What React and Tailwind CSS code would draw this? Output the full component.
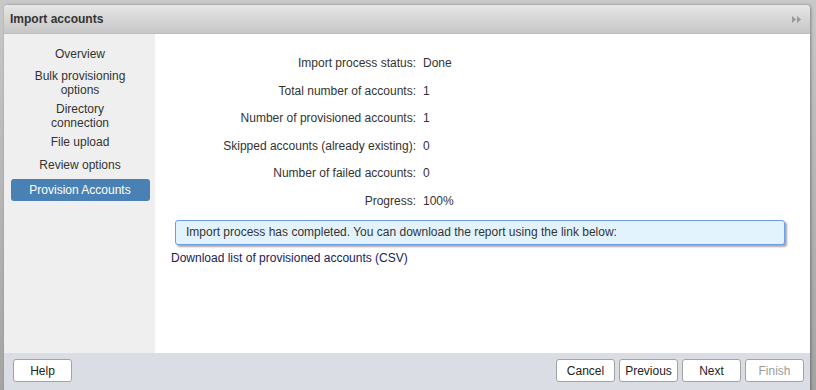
import React from "react";

const rows = [
  ["Import process status:", "Done"],
  ["Total number of accounts:", "1"],
  ["Number of provisioned accounts:", "1"],
  ["Skipped accounts (already existing):", "0"],
  ["Number of failed accounts:", "0"],
  ["Progress:", "100%"],
];

function Btn({ children, disabled }) {
  return (
    <button
      className={
        "w-[59px] h-[23px] bg-white border border-[#a3a3a3] rounded-[3px] text-[12px] " +
        (disabled ? "text-[#9c9c9c]" : "text-[#222]")
      }
    >
      {children}
    </button>
  );
}

export default function App() {
  return (
    <div className="w-[816px] h-[390px] overflow-hidden bg-gradient-to-b from-[#c8c8c8] to-[#a4a4a4] pl-[4px] pt-[5px] pr-[6px] font-['Liberation_Sans',Arial,sans-serif] text-[12px] text-[#333]">
      <div className="h-[400px] flex flex-col bg-white rounded-t-[4px] shadow-[1px_0_3px_rgba(0,0,0,0.35)] overflow-hidden">
        <div className="h-[29px] shrink-0 flex items-center justify-between pl-[6px] pr-[9px] bg-gradient-to-b from-[#e6e6e6] to-[#c6c6c6] border-b border-[#bdbdbd]">
          <span className="font-bold text-[12px] text-[#333]">Import accounts</span>
          <svg width="9" height="7" viewBox="0 0 9 7">
            <path d="M0 0 L4 3.5 L0 7 Z M5 0 L9 3.5 L5 7 Z" fill="#9a9a9a" />
          </svg>
        </div>
        <div className="h-[319px] shrink-0 flex">
          <div className="w-[151px] shrink-0 bg-[#efefef] flex flex-col items-center pt-[13px] pl-[1px] leading-[14px] text-center text-[#333]">
            <div className="h-[20px]">Overview</div>
            <div className="mt-[2px]">Bulk provisioning<br />options</div>
            <div className="mt-[5px]">Directory<br />connection</div>
            <div className="mt-[5px] h-[22px]">File upload</div>
            <div className="h-[22px] pt-[1px]">Review options</div>
            <div className="w-[139px] h-[22px] bg-[#4a81b4] rounded-[3px] text-white flex items-center justify-center">
              Provision Accounts
            </div>
          </div>
          <div className="flex-1 flex flex-col pt-[22px] pl-[16px] pr-[25px]">
            <div className="flex flex-col gap-[13.6px] leading-[14px]">
              {rows.map(([k, v]) => (
                <div key={k} className="flex">
                  <div className="w-[245px] text-right">{k}</div>
                  <div className="pl-[7px]">{v}</div>
                </div>
              ))}
            </div>
            <div className="mt-[12px] ml-[4px] h-[25px] flex items-center pl-[10px] bg-[#e3f3fd] border border-[#6d9ceb] rounded-[3px] shadow-[2px_2px_2px_rgba(0,0,0,0.35)]">
              Import process has completed. You can download the report using the link below:
            </div>
            <div className="mt-[4px] text-[#1a1a5c]">Download list of provisioned accounts (CSV)</div>
          </div>
        </div>
        <div className="flex-1 bg-[#dadee4] flex items-start justify-between pt-[6px] pl-[9px] pr-[6px]">
          <Btn>Help</Btn>
          <div className="flex gap-[4px]">
            <Btn>Cancel</Btn>
            <Btn>Previous</Btn>
            <Btn>Next</Btn>
            <Btn disabled>Finish</Btn>
          </div>
        </div>
      </div>
    </div>
  );
}
